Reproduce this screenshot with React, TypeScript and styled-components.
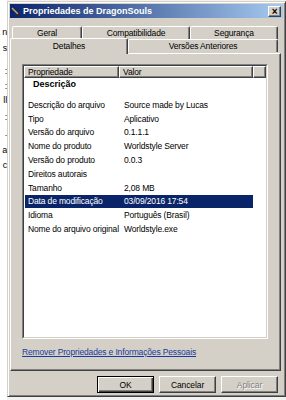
import React from 'react';
import styled, { createGlobalStyle } from 'styled-components';

const GlobalStyle = createGlobalStyle`
  html, body {
    margin: 0;
    padding: 0;
    background: #fff;
  }
  body {
    width: 286px;
    height: 400px;
    overflow: hidden;
    font-family: "Liberation Sans", Arial, sans-serif;
    font-size: 8.5px;
    letter-spacing: -0.15px;
    color: #000;
  }
`;

const Screen = styled.div`
  display: flex;
  width: 286px;
  height: 400px;
  background: #f2f2f2;
  overflow: hidden;
`;

const Backdrop = styled.div`
  width: 7px;
  flex: none;
  background: #fff;
  display: flex;
  flex-direction: column;
  align-items: flex-end;
  overflow: hidden;
`;

const Fragment = styled.span<{ $top: number }>`
  margin-top: ${p => p.$top}px;
  line-height: 10px;
  font-size: 9px;
  white-space: nowrap;
`;

const Dialog = styled.div`
  box-sizing: border-box;
  flex: 1;
  margin-top: 1px;
  height: 396px;
  display: flex;
  flex-direction: column;
  background: #d4d0c8;
  border: 1px solid;
  border-color: #d4d0c8 #404040 #404040 #d4d0c8;
  box-shadow: inset 1px 1px #fff, inset -1px -1px #808080;
  padding: 2px;
`;

const TitleBar = styled.div`
  height: 14px;
  display: flex;
  align-items: center;
  gap: 3px;
  padding: 0 2px 0 1px;
  background: linear-gradient(to right, #0a246a, #a6caf0);
`;

const TitleText = styled.span`
  flex: 1;
  color: #fff;
  font-weight: bold;
  font-size: 9px;
  letter-spacing: 0;
`;

const CloseButton = styled.div`
  box-sizing: border-box;
  width: 13px;
  height: 11px;
  display: flex;
  align-items: center;
  justify-content: center;
  background: #d4d0c8;
  border: 1px solid;
  border-color: #fff #404040 #404040 #fff;
  box-shadow: inset -1px -1px #808080;
  font-size: 10px;
  font-weight: bold;
  line-height: 9px;
`;

const Body = styled.div`
  display: flex;
  flex-direction: column;
  padding: 8px 0 0 0;
  margin-right: 2px;
`;

const TabRow = styled.div<{ $pad: number }>`
  display: flex;
  align-items: flex-end;
  height: 13px;
  padding-left: ${p => p.$pad}px;
  position: relative;
`;

const Tab = styled.div<{ $w: number; $active?: boolean }>`
  box-sizing: border-box;
  width: ${p => p.$w}px;
  height: ${p => (p.$active ? 16 : 13)}px;
  margin-bottom: ${p => (p.$active ? -2 : 0)}px;
  position: relative;
  z-index: ${p => (p.$active ? 2 : 1)};
  display: flex;
  align-items: center;
  justify-content: center;
  padding-bottom: ${p => (p.$active ? 2 : 0)}px;
  background: #d4d0c8;
  border: 1px solid;
  border-bottom: none;
  border-color: #fff #404040 transparent #fff;
  box-shadow: inset -1px 0 #808080;
  border-radius: 2px 2px 0 0;
`;

const Panel = styled.div`
  box-sizing: border-box;
  height: 318px;
  margin-top: 1px;
  display: flex;
  flex-direction: column;
  border: 1px solid;
  border-color: #fff #404040 #404040 #fff;
  box-shadow: inset -1px -1px #808080;
  padding: 10px 12px 0 11px;
`;

const ListOuter = styled.div`
  height: 275px;
  box-sizing: border-box;
  border: 1px solid;
  border-color: #808080 #fff #fff #808080;
`;

const ListInner = styled.div`
  box-sizing: border-box;
  height: 100%;
  background: #fff;
  border: 1px solid;
  border-color: #404040 #d4d0c8 #d4d0c8 #404040;
  overflow: hidden;
`;

const Header = styled.div`
  display: flex;
  height: 12px;
`;

const HeaderCell = styled.div<{ $w?: number }>`
  box-sizing: border-box;
  ${p => (p.$w ? `width: ${p.$w}px;` : 'flex: 1;')}
  display: flex;
  align-items: center;
  padding-left: 3px;
  background: #d4d0c8;
  border: 1px solid;
  border-color: #fff #404040 #404040 #fff;
  box-shadow: inset -1px -1px #808080;
`;

const Group = styled.div`
  height: 20px;
  line-height: 13px;
  padding-left: 9px;
  font-weight: bold;
  font-size: 9px;
  letter-spacing: 0;
`;

const Row = styled.div<{ $selected?: boolean }>`
  display: flex;
  height: 13.8px;
  align-items: center;
  margin-left: 1px;
  width: 228px;
  background: ${p => (p.$selected ? '#0a246a' : 'transparent')};
  color: ${p => (p.$selected ? '#fff' : '#000')};
`;

const Cell = styled.span<{ $w?: number }>`
  white-space: nowrap;
  ${p => (p.$w ? `width: ${p.$w}px; flex: none;` : 'flex: 1;')}
  padding-left: ${p => (p.$w ? 3 : 5)}px;
  box-sizing: border-box;
`;

const RemoveLink = styled.a`
  margin-top: 8px;
  color: #1a3a9c;
  text-decoration: underline;
  line-height: 10px;
  cursor: pointer;
`;

const ButtonBar = styled.div`
  display: flex;
  justify-content: flex-end;
  gap: 5px;
  margin-top: 5px;
  padding-right: 3px;
`;

const Button = styled.button<{ $default?: boolean }>`
  box-sizing: border-box;
  width: 57px;
  height: 17px;
  padding: 0;
  font-family: inherit;
  font-size: 8.5px;
  letter-spacing: -0.1px;
  background: #d4d0c8;
  color: ${p => (p.disabled ? '#808080' : '#000')};
  text-shadow: ${p => (p.disabled ? '1px 1px #fff' : 'none')};
  border: 1px solid;
  border-color: ${p => (p.$default ? '#000' : '#fff #404040 #404040 #fff')};
  box-shadow: ${p =>
    p.$default
      ? 'inset 1px 1px #fff, inset -1px -1px #404040, inset -2px -2px #808080'
      : 'inset -1px -1px #808080'};
`;

const rows: [string, string][] = [
  ['Descrição do arquivo', 'Source made by Lucas'],
  ['Tipo', 'Aplicativo'],
  ['Versão do arquivo', '0.1.1.1'],
  ['Nome do produto', 'Worldstyle Server'],
  ['Versão do produto', '0.0.3'],
  ['Direitos autorais', ''],
  ['Tamanho', '2,08 MB'],
  ['Data de modificação', '03/09/2016 17:54'],
  ['Idioma', 'Português (Brasil)'],
  ['Nome do arquivo original', 'Worldstyle.exe'],
];

const fragments: [number, string][] = [
  [27, 'n'],
  [6, 's'],
  [13, ':'],
  [5, ':'],
  [4, 'll'],
  [7, ':'],
  [6, '.'],
  [7, 'a'],
  [5, 'c'],
];

const App: React.FC = () => (
  <Screen>
    <GlobalStyle />
    <Backdrop>
      {fragments.map(([top, t], i) => (
        <Fragment key={i} $top={top}>
          {t}
        </Fragment>
      ))}
    </Backdrop>
    <Dialog>
      <TitleBar>
        <svg width="9" height="9" viewBox="0 0 9 9">
          <path d="M1 1 L7 7" stroke="#c8a070" strokeWidth="1.5" />
          <path d="M5 8 L8 8 L8 5" stroke="#402010" strokeWidth="1" fill="none" />
        </svg>
        <TitleText>Propriedades de DragonSouls</TitleText>
        <CloseButton>×</CloseButton>
      </TitleBar>
      <Body>
        <TabRow $pad={2}>
          <Tab $w={70}>Geral</Tab>
          <Tab $w={108}>Compatibilidade</Tab>
          <Tab $w={88}>Segurança</Tab>
        </TabRow>
        <TabRow $pad={0}>
          <Tab $w={118} $active>
            Detalhes
          </Tab>
          <Tab $w={150}>Versões Anteriores</Tab>
        </TabRow>
        <Panel>
          <ListOuter>
            <ListInner>
              <Header>
                <HeaderCell $w={95}>Propriedade</HeaderCell>
                <HeaderCell $w={134}>Valor</HeaderCell>
                <HeaderCell />
              </Header>
              <Group>Descrição</Group>
              {rows.map(([k, v]) => (
                <Row key={k} $selected={k === 'Data de modificação'}>
                  <Cell $w={94}>{k}</Cell>
                  <Cell>{v}</Cell>
                </Row>
              ))}
            </ListInner>
          </ListOuter>
          <RemoveLink>Remover Propriedades e Informações Pessoais</RemoveLink>
        </Panel>
        <ButtonBar>
          <Button $default>OK</Button>
          <Button>Cancelar</Button>
          <Button disabled>Aplicar</Button>
        </ButtonBar>
      </Body>
    </Dialog>
  </Screen>
);

export default App;
